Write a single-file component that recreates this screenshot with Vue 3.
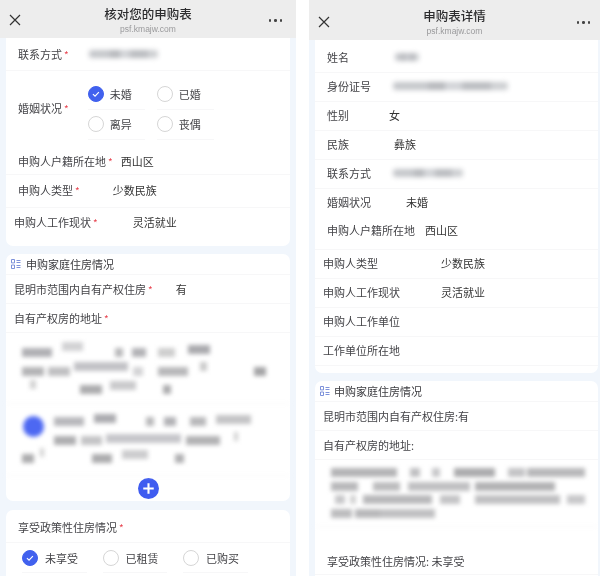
<script setup>
const piece = (p) => ({ width: p[0] + 'px', marginLeft: p[1] + 'px', background: p[2], transform: 'translateY(' + (p[3] || 0) + 'px)' })
const addrA = [
  [[30, 0, '#b0b0b4'], [21, 10, '#d2d2d4', -6], [8, 32, '#b9b9bb'], [14, 9, '#b2b2b6'], [17, 12, '#cecece'], [22, 13, '#aaaaae', -3]],
  [[22, 0, '#b4b4b6'], [22, 4, '#c0c0c2'], [54, 4, '#c2c2c6', -5], [10, 5, '#d4d4d6'], [30, 15, '#b8b8ba'], [7, 12, '#cacaca', -5], [12, 47, '#a4a4a6']],
  [[6, 8, '#d2d2d2', -5], [22, 44, '#acacae'], [26, 8, '#cacacc', -4], [8, 27, '#acacae']]
]
const addrB = [
  [[30, 32, '#b8b8bc'], [22, 10, '#acacb0', -3], [8, 30, '#b9b9bb'], [12, 10, '#b2b2b6'], [16, 14, '#b8b8ba'], [35, 10, '#c4c4c6', -2]],
  [[22, 32, '#aeaeb0'], [21, 5, '#c4c4c6'], [75, 4, '#c6c6ca', -2], [34, 5, '#b2b2b4'], [4, 14, '#d0d0d0', -4]],
  [[12, 0, '#acacae'], [4, 6, '#d2d2d2', -6], [20, 48, '#acacae'], [26, 10, '#cccccE', -4], [9, 27, '#b0b0b2']]
]
const addrR = [
  [[66, 0, '#b4b4b6'], [10, 13, '#c0c0c2'], [8, 12, '#c8c8ca'], [41, 14, '#acacae'], [17, 13, '#c4c4c6'], [58, 2, '#b8b8ba']],
  [[27, 0, '#b8b8ba'], [27, 15, '#bcbcbe'], [62, 8, '#c0c0c2'], [80, 5, '#b2b2b4']],
  [[10, 4, '#c8c8ca'], [6, 5, '#d2d2d2'], [69, 7, '#b8b8ba'], [20, 8, '#c4c4c6'], [85, 15, '#c0c0c2'], [18, 7, '#c8c8ca']],
  [[21, 0, '#bcbcbe'], [25, 3, '#b8b8ba'], [55, 0, '#c0c0c2']]
]
</script>

<template>
  <div class="page">
    <section class="panel left">
      <header class="bar">
        <svg class="close" viewBox="0 0 12 12"><path d="M1 1l10 10M11 1L1 11" /></svg>
        <div class="titles">
          <div class="title">核对您的申购表</div>
          <div class="host">psf.kmajw.com</div>
        </div>
        <div class="more"><i></i><i></i><i></i></div>
      </header>
      <div class="body">
        <div class="card first">
          <div class="row l-contact"><span class="lab">联系方式<b>*</b></span><span class="smear s-contact"></span></div>
          <div class="row l-marry">
            <span class="lab">婚姻状况<b>*</b></span>
            <div class="opts">
              <div class="opt"><span class="radio on"><svg viewBox="0 0 16 16"><path d="M4.5 8.2l2.4 2.3 4.4-4.6" /></svg></span>未婚</div>
              <div class="opt"><span class="radio"></span>已婚</div>
              <div class="opt"><span class="radio"></span>离异</div>
              <div class="opt"><span class="radio"></span>丧偶</div>
            </div>
          </div>
          <div class="row l-home"><span class="lab">申购人户籍所在地<b>*</b></span><span class="val">西山区</span></div>
          <div class="row l-type"><span class="lab">申购人类型<b>*</b></span><span class="val">少数民族</span></div>
          <div class="row l-work plain"><span class="lab">申购人工作现状<b>*</b></span><span class="val">灵活就业</span></div>
        </div>

        <div class="card second">
          <div class="row head"><svg class="ico" viewBox="0 0 10 10"><path d="M.5.5h3v3.4h-3zM.5 6h3v3.5h-3zM5.5 1.5h4M5.5 3.5h4M5.5 6.5h4M5.5 8.5h4" /></svg>申购家庭住房情况</div>
          <div class="row l-own"><span class="lab">昆明市范围内自有产权住房<b>*</b></span><span class="val">有</span></div>
          <div class="row l-addr"><span class="lab">自有产权房的地址<b>*</b></span></div>
          <div class="addr a1">
            <div v-for="(line, i) in addrA" :key="i" class="line"><span v-for="(p, j) in line" :key="j" class="px" :style="piece(p)"></span></div>
          </div>
          <div class="addr a2">
            <span class="dot"></span>
            <div v-for="(line, i) in addrB" :key="i" class="line"><span v-for="(p, j) in line" :key="j" class="px" :style="piece(p)"></span></div>
          </div>
          <div class="plusrow"><span class="plus"><svg viewBox="0 0 20 20"><path d="M10 5v10M5 10h10" /></svg></span></div>
        </div>

        <div class="card third">
          <div class="row l-policy"><span class="lab">享受政策性住房情况<b>*</b></span></div>
          <div class="polopts">
            <div class="opt"><span class="radio on"><svg viewBox="0 0 16 16"><path d="M4.5 8.2l2.4 2.3 4.4-4.6" /></svg></span>未享受</div>
            <div class="opt"><span class="radio"></span>已租赁</div>
            <div class="opt"><span class="radio"></span>已购买</div>
          </div>
        </div>
      </div>
    </section>

    <section class="panel right">
      <header class="bar tall">
        <svg class="close" viewBox="0 0 12 12"><path d="M1 1l10 10M11 1L1 11" /></svg>
        <div class="titles">
          <div class="title">申购表详情</div>
          <div class="host">psf.kmajw.com</div>
        </div>
        <div class="more"><i></i><i></i><i></i></div>
      </header>
      <div class="body">
        <div class="card rfirst">
          <div class="row r d-name"><span class="lab">姓名</span><span class="smear s-name"></span></div>
          <div class="row r d-id"><span class="lab">身份证号</span><span class="smear s-id"></span></div>
          <div class="row r d-sex"><span class="lab">性别</span><span class="val">女</span></div>
          <div class="row r d-eth"><span class="lab">民族</span><span class="val">彝族</span></div>
          <div class="row r d-con"><span class="lab">联系方式</span><span class="smear s-con"></span></div>
          <div class="row r d-mar plain"><span class="lab">婚姻状况</span><span class="val">未婚</span></div>
          <div class="row r d-home"><span class="lab">申购人户籍所在地</span><span class="val">西山区</span></div>
          <div class="row r2 d-type"><span class="lab">申购人类型</span><span class="val">少数民族</span></div>
          <div class="row r2 d-work"><span class="lab">申购人工作现状</span><span class="val">灵活就业</span></div>
          <div class="row r2"><span class="lab">申购人工作单位</span></div>
          <div class="row r2"><span class="lab">工作单位所在地</span></div>
        </div>
        <div class="card rsecond">
          <div class="row head"><svg class="ico" viewBox="0 0 10 10"><path d="M.5.5h3v3.4h-3zM.5 6h3v3.5h-3zM5.5 1.5h4M5.5 3.5h4M5.5 6.5h4M5.5 8.5h4" /></svg>申购家庭住房情况</div>
          <div class="row r2 tight"><span class="lab">昆明市范围内自有产权住房:有</span></div>
          <div class="row r2 tight"><span class="lab">自有产权房的地址:</span></div>
          <div class="addr ar">
            <div v-for="(line, i) in addrR" :key="i" class="line lr"><span v-for="(p, j) in line" :key="j" class="px" :style="piece(p)"></span></div>
          </div>
          <div class="row policy"><span class="lab">享受政策性住房情况: 未享受</span></div>
        </div>
      </div>
    </section>
  </div>
</template>

<style>
html, body { margin: 0; background: #fff; }
</style>

<style scoped>
.page {
  width: 600px;
  height: 576px;
  display: flex;
  justify-content: space-between;
  overflow: hidden;
  background: #fff;
  font-family: "Noto Sans CJK SC", "Noto Sans", sans-serif;
  font-size: 11px;
  color: #444448;
  filter: blur(0.4px);
}
.panel { height: 576px; overflow: hidden; background: #f1f6fc; }
.left { width: 296px; }
.right { width: 291px; }
.bar {
  height: 38px;
  background: #ededed;
  position: relative;
  display: flex;
  justify-content: center;
}
.bar.tall { height: 40px; }
.titles { text-align: center; padding-top: 6px; }
.right .titles { padding-top: 8px; }
.title { font-size: 12.5px; line-height: 16px; font-weight: 500; color: #2c2c2e; }
.host { font-family: "Liberation Sans", sans-serif; font-size: 8.5px; line-height: 12px; color: #9a9a9c; margin-top: 1px; }
.close { position: absolute; left: 9px; top: 14px; width: 12px; height: 12px; }
.right .close { left: 9px; top: 16px; }
.close path { fill: none; stroke: #333; stroke-width: 1.2; }
.more { position: absolute; right: 14px; top: 19px; display: flex; gap: 3px; }
.right .more { right: 10px; top: 21px; }
.more i { width: 2.5px; height: 2.5px; border-radius: 50%; background: #444; }

.body { padding: 0 0 0 6px; }
.left .body { padding-right: 6px; }
.right .body { padding-right: 2px; }
.card { background: #fff; border-radius: 7px; margin-bottom: 8px; }
.first { border-radius: 0 0 7px 7px; height: 208px; }
.rfirst { border-radius: 0 0 7px 7px; height: 333px; }
.second { height: 247px; margin-bottom: 9px; }
.third { height: 80px; }
.rsecond { height: 220px; }

.row {
  display: flex;
  align-items: center;
  height: 33px;
  padding-left: 12px;
  border-bottom: 1px solid #f7f7f8;
  box-sizing: border-box;
  white-space: nowrap;
}
.plain { border-bottom-color: transparent; }
.lab b { color: #e8434f; font-weight: 400; margin-left: 2px; font-size: 10px; }
.val { color: #333; }
.smear {
  display: block;
  height: 8px;
  background: linear-gradient(90deg, #c4c6ca 0 30%, #b4b6ba 30% 45%, #d0d2d6 45% 60%, #b8babe 60% 85%, #cdcfd2 85%);
  filter: blur(2.5px);
  border-radius: 3px;
}

.l-contact .smear { margin-left: 20px; }
.s-contact { width: 69px; }
.l-marry { min-height: 74px; border-bottom: 0; }
.l-marry .lab { margin-top: -1px; }
.opts { display: grid; grid-template-columns: 57px 57px; column-gap: 12px; margin-left: 19px; padding-top: 3px; }
.opt { display: flex; align-items: center; gap: 6px; height: 30px; border-bottom: 1px solid #f7f7f8; box-sizing: border-box; }
.radio { width: 16px; height: 16px; border: 1px solid #d6d6d6; border-radius: 50%; box-sizing: border-box; display: block; background: #fff; }
.radio.on { background: #4161ee; border-color: #4161ee; }
.radio svg { display: block; width: 14px; height: 14px; }
.radio path { fill: none; stroke: #fff; stroke-width: 1.3; }
.l-home { height: 30px; padding-top: 2px; }
.l-home .val { margin-left: 8px; }
.l-type { height: 33px; padding-bottom: 2px; }
.l-type .val { margin-left: 33px; }
.l-work { height: 38px; padding-left: 8px; padding-bottom: 10px; }
.l-work .val { margin-left: 35px; }

.head { height: 21px; padding-left: 5px; color: #3c3c40; align-items: center; }
.ico { width: 10px; height: 10px; margin-right: 5px; flex: none; }
.rsecond .ico { margin-right: 4px; }
.ico path { fill: none; stroke: #6f86d6; stroke-width: 0.9; }
.second .row:not(.head), .third .l-policy { padding-left: 8px; }
.l-own { height: 29px; }
.l-own .val { margin-left: 23px; }
.l-addr { height: 29px; }

.addr { box-sizing: border-box; position: relative; border-bottom: 1px solid #f7f7f8; filter: blur(2px); overflow: hidden; }
.a1 { height: 71px; padding: 15px 0 0 16px; }
.a2 { height: 72px; padding: 13px 0 0 16px; }
.line { display: flex; height: 9px; margin-bottom: 9.5px; align-items: center; }
.px { display: block; height: 9px; flex: none; }
.dot {
  position: absolute;
  left: 17px;
  top: 12px;
  width: 21px;
  height: 21px;
  border-radius: 50%;
  background: #4d68f2;
}
.plusrow { display: flex; justify-content: center; padding-top: 2px; }
.plus { width: 21px; height: 21px; border-radius: 50%; background: #3f5cf0; display: block; }
.plus svg { display: block; width: 21px; height: 21px; }
.plus path { fill: none; stroke: #fff; stroke-width: 2; }

.l-policy { height: 33px; padding-left: 12px !important; padding-top: 2px; }
.polopts { display: flex; padding-left: 16px; gap: 16px; padding-top: 1px; }
.polopts .opt { width: 64.5px; height: 29px; gap: 7px; }

.r { height: 29px; padding-left: 12px; padding-bottom: 2px; }
.r2 { height: 29px; padding-left: 8px; padding-bottom: 2px; }
.d-name .smear { margin-left: 46px; width: 24px; }
.s-id { margin-left: 22px; width: 115px; }
.s-con { margin-left: 22px; width: 70px; }
.rfirst .r:first-child { height: 33px; padding-top: 2px; padding-bottom: 0; }
.d-sex .val { margin-left: 40px; }
.d-eth .val { margin-left: 45px; }
.d-mar .val { margin-left: 35px; }
.d-home { height: 32px; padding-bottom: 7px; }
.d-home .val { margin-left: 10px; }
.d-type .val { margin-left: 63px; }
.d-work .val { margin-left: 41px; }
.rsecond .head { height: 21px; padding-left: 5px; }
.tight { height: 29px; padding-bottom: 0; }
.ar { height: 67px; padding: 8px 0 0 16px; }
.lr { margin-bottom: 4.5px; }
.policy { height: 48px; padding-top: 20px; padding-left: 12px; }
</style>
